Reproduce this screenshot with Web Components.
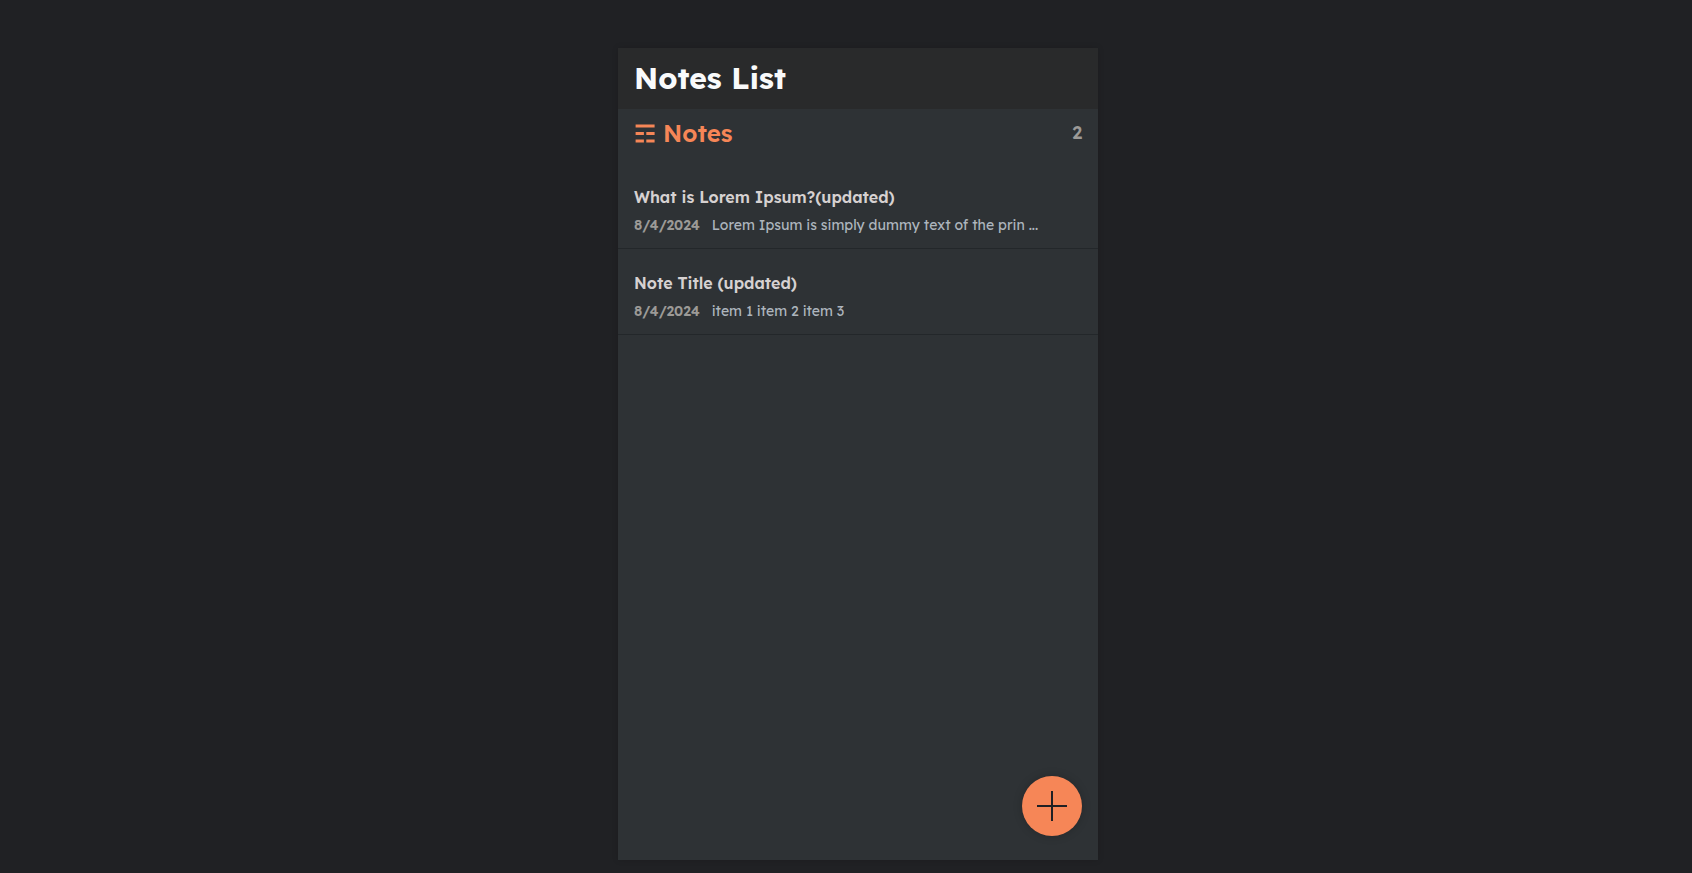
<!DOCTYPE html>
<html lang="en">
<head>
<meta charset="utf-8">
<meta name="viewport" content="width=device-width, initial-scale=1">
<title>Notes List</title>
<style>
  body {
    margin: 0;
    min-height: 100vh;
    background: #202124;
    color: #d6d1d1;
    font-family: Lexend, Inter, "Noto Sans", sans-serif;
  }
</style>
</head>
<body>
<notes-app>
  <app-header>Notes List</app-header>
  <notes-header count="2">Notes</notes-header>
  <notes-list>
    <note-item date="8/4/2024" href="#note-1">What is Lorem Ipsum?(updated)<span slot="preview">Lorem Ipsum is simply dummy text of the prin ...</span></note-item>
    <note-item date="8/4/2024" href="#note-2">Note Title (updated)<span slot="preview">item 1 item 2 item 3</span></note-item>
  </notes-list>
  <add-button></add-button>
</notes-app>
<script>
  class BaseElement extends HTMLElement {
    connectedCallback() {
      if (this.shadowRoot) return;
      this.attachShadow({ mode: "open" }).innerHTML = this.render();
    }
  }

  customElements.define("notes-app", class extends BaseElement {
    render() {
      return `<style>
        :host { display: flex; justify-content: center; box-sizing: border-box; min-height: 100vh; padding: 48px 0 13px 24px; }
        main { position: relative; width: 100%; max-width: 480px; background: #2e3235; box-shadow: 0 0 6px rgba(0, 0, 0, .15); }
      </style>
      <main><slot></slot></main>`;
    }
  });

  customElements.define("app-header", class extends BaseElement {
    render() {
      return `<style>
        :host { display: block; padding: 0 16px; background: #292a2b; }
        h1 { margin: 0; font-size: 30px; line-height: 61px; font-weight: 700; color: #f9fafb; }
      </style>
      <h1><slot></slot></h1>`;
    }
  });

  customElements.define("notes-header", class extends BaseElement {
    render() {
      return `<style>
        :host { display: flex; align-items: center; justify-content: space-between; height: 48px; padding: 0 16px; }
        h2 { display: flex; align-items: center; gap: 8px; margin: 0; font-size: 24px; line-height: 48px; font-weight: 600; color: #f68657; }
        svg { fill: currentColor; }
        p { margin: 0; font-size: 18px; line-height: 48px; font-weight: 600; color: #9c9a97; }
      </style>
      <h2><svg width="21" height="20" viewBox="0 0 21 20" aria-hidden="true"><path d="M1.6 1.4H20.6V4.6H1.6ZM1.6 9H9.9V12H1.6ZM12.3 9H20.6V12H12.3ZM1.6 16.4H9.9V19.6H1.6ZM12.3 16.4H20.6V19.6H12.3Z"/></svg><slot></slot></h2>
      <p>${this.getAttribute("count")}</p>`;
    }
  });

  customElements.define("notes-list", class extends BaseElement {
    render() {
      return `<style>
        :host { display: block; padding-top: 6px; }
      </style>
      <slot></slot>`;
    }
  });

  customElements.define("note-item", class extends BaseElement {
    render() {
      return `<style>
        :host { display: block; border-bottom: 1px solid #23272a; }
        a { display: block; padding: 20px 16px 9px; color: inherit; text-decoration: none; }
        h3 { margin: 0; font-size: 16px; line-height: 28px; font-weight: 600; color: #d6d1d1; }
        p { display: flex; gap: 12px; margin: 0; font-size: 14px; line-height: 28px; color: #adb5bd; white-space: nowrap; }
        time { font-weight: 600; color: #9c9a97; }
      </style>
      <a href="${this.getAttribute("href")}">
        <h3><slot></slot></h3>
        <p><time>${this.getAttribute("date")}</time><slot name="preview"></slot></p>
      </a>`;
    }
  });

  customElements.define("add-button", class extends BaseElement {
    render() {
      return `<style>
        :host { position: absolute; right: 16px; bottom: 24px; }
        button { display: block; width: 60px; height: 60px; padding: 0; border: 0; border-radius: 50%; background: #f68657; box-shadow: 0 0 10px rgba(0, 0, 0, .2); cursor: pointer; }
        svg { display: block; margin: auto; }
      </style>
      <button type="button" aria-label="Add note">
        <svg width="30" height="30" viewBox="0 0 30 30" fill="none" stroke="#1f2024" stroke-width="2" aria-hidden="true"><path d="M15 0V30M0 15H30"/></svg>
      </button>`;
    }
  });
</script>
</body>
</html>
